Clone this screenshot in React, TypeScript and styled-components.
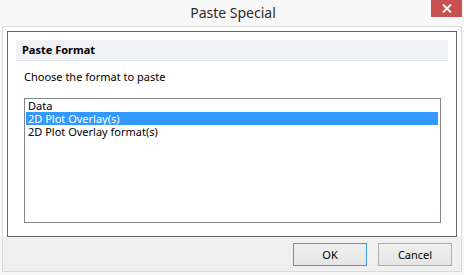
import React, { useState } from "react";
import styled, { createGlobalStyle } from "styled-components";

const GlobalStyle = createGlobalStyle`
  *, *::before, *::after {
    box-sizing: border-box;
  }
  html, body {
    margin: 0;
    padding: 0;
    background: #f8f8f8;
    font-family: "Noto Sans", "Open Sans", sans-serif;
    font-size: 11px;
    color: #000;
  }
`;

const Screen = styled.div`
  width: 464px;
  height: 275px;
  overflow: hidden;
  background: #f8f8f8;
`;

const TitleBar = styled.div`
  position: relative;
  height: 26px;
  display: flex;
  align-items: center;
  justify-content: center;
`;

const Title = styled.div`
  font-size: 14px;
  color: #2b2b2b;
  padding-left: 2px;
  line-height: 20px;
  margin-top: -1px;
`;

const CloseButton = styled.div`
  position: absolute;
  top: 0;
  left: 431px;
  width: 31px;
  height: 17px;
  background: #c75050;
  display: flex;
  align-items: center;
  justify-content: center;
`;

const Frame = styled.div`
  margin-left: 2px;
  width: 460px;
  height: 246px;
  border: 1px solid #dadada;
  background: #ffffff;
  display: flex;
  flex-direction: column;
`;

const Body = styled.div`
  flex: 1;
  padding: 4px 4px 0 4px;
`;

const Panel = styled.div`
  height: 206px;
  border: 1px solid #646464;
  padding: 8px;
`;

const SectionHeader = styled.div`
  height: 21px;
  background: #f0f1f5;
  border-bottom: 1px solid #e1e3ea;
  font-weight: bold;
  display: flex;
  align-items: center;
  padding-left: 6px;
  padding-bottom: 1px;
`;

const Prompt = styled.div`
  margin: 8px 0 0 8px;
  line-height: 16px;
`;

const ListBox = styled.div`
  margin: 13px 0 0 8px;
  width: 417px;
  height: 125px;
  border: 1px solid #828790;
  padding: 0 1px;
`;

const ListItem = styled.div<{ $selected?: boolean }>`
  height: 13px;
  line-height: 13px;
  padding-left: 2px;
  margin-right: 1px;
  white-space: nowrap;
  background: ${(p) => (p.$selected ? "#3399ff" : "transparent")};
  color: ${(p) => (p.$selected ? "#ffffff" : "#000000")};
  cursor: default;
`;

const Footer = styled.div`
  height: 34px;
  background: #f0f0f0;
  display: flex;
  justify-content: flex-end;
  align-items: flex-start;
  gap: 11px;
  padding: 6px 9px 0 0;
`;

const Button = styled.button<{ $default?: boolean }>`
  width: 74px;
  height: 23px;
  margin: 0;
  padding: 0;
  font-family: inherit;
  font-size: 11px;
  color: #000;
  border: 1px solid ${(p) => (p.$default ? "#3c9af0" : "#adadad")};
  background: linear-gradient(#f0f0f0, #e5e5e5);
  cursor: default;
`;

const formats = ["Data", "2D Plot Overlay(s)", "2D Plot Overlay format(s)"];

export default function App() {
  const [selected, setSelected] = useState(1);
  return (
    <Screen>
      <GlobalStyle />
      <TitleBar>
        <Title>Paste Special</Title>
        <CloseButton>
          <svg width="10" height="9" viewBox="0 0 10 9">
            <path d="M1 0.5 L9 8.5 M9 0.5 L1 8.5" stroke="#fff" strokeWidth="1.8" />
          </svg>
        </CloseButton>
      </TitleBar>
      <Frame>
        <Body>
          <Panel>
            <SectionHeader>Paste Format</SectionHeader>
            <Prompt>Choose the format to paste</Prompt>
            <ListBox>
              {formats.map((f, i) => (
                <ListItem key={f} $selected={i === selected} onClick={() => setSelected(i)}>
                  {f}
                </ListItem>
              ))}
            </ListBox>
          </Panel>
        </Body>
        <Footer>
          <Button $default>OK</Button>
          <Button>Cancel</Button>
        </Footer>
      </Frame>
    </Screen>
  );
}
